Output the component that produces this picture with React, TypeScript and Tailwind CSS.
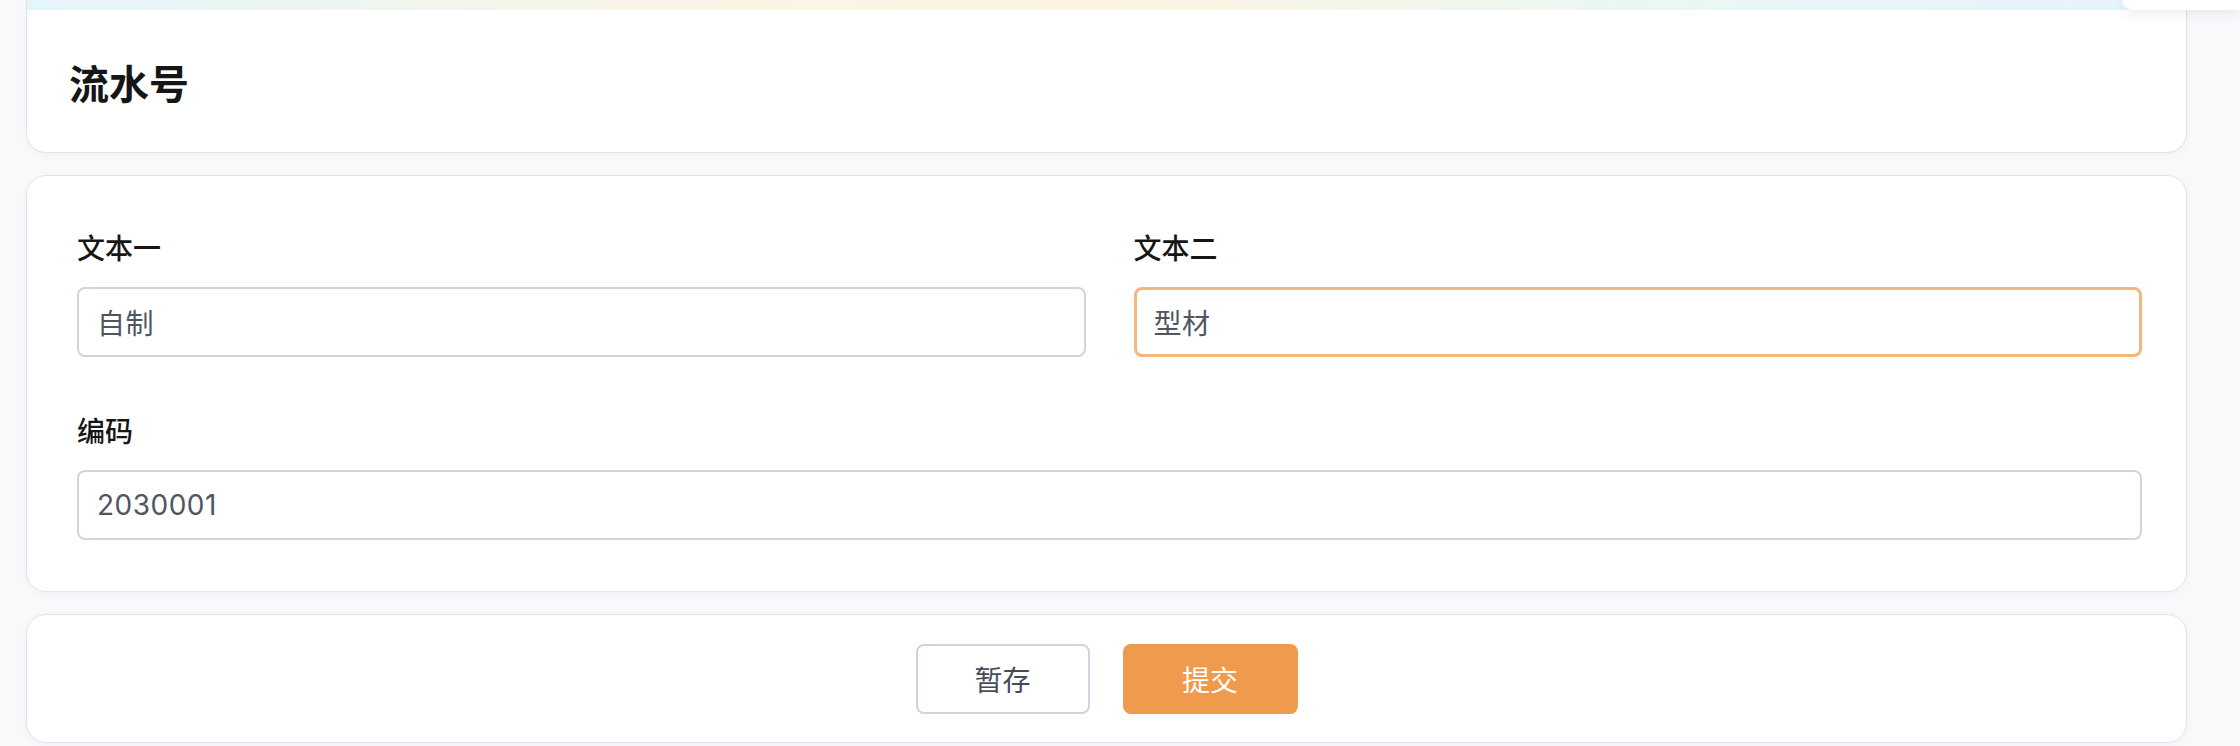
import React, { FC, useState } from "react";

const font = "font-['Noto_Sans_CJK_SC','Noto_Sans',sans-serif]";

interface FieldProps {
	label: string;
	value: string;
	focused?: boolean;
}

const Field: FC<FieldProps> = ({ label, value, focused }) => (
	<div className="flex flex-col">
		<label className="h-[40px] text-[28px] leading-[40px] font-medium text-[#161616]">
			{label}
		</label>
		<input
			className={`mt-[20px] h-[70px] w-full rounded-[8px] bg-white text-[28px] tracking-[0.5px] text-[#50555f] outline-none font-['Inter','Noto_Sans_CJK_SC',sans-serif] ${
				focused
					? "border-[3px] border-[#f4b67d] px-[17px]"
					: "border-2 border-[#d0d4e0] px-[18px]"
			}`}
			defaultValue={value}
		/>
	</div>
);

const App: FC = () => {
	const [saved, setSaved] = useState(false);

	return (
		<div
			className={`relative min-h-[746px] w-[2240px] overflow-hidden bg-[#f8f9fb] ${font}`}
		>
			{/* top right overlay */}
			<div className="absolute top-0 right-0 z-10 h-[10px] w-[118px] rounded-bl-[12px] bg-white shadow-[0_4px_12px_rgba(30,40,80,0.08)]" />

			<div className="flex w-[2161px] flex-col gap-[22px] ml-[26px]">
				{/* Header card */}
				<div className="overflow-hidden rounded-b-[20px] border border-t-0 border-[#e2e4eb] bg-white shadow-[0_2px_8px_rgba(30,40,80,0.03)]">
					<div className="h-[10px] bg-[linear-gradient(90deg,#e4f5fa_0%,#f9f5e6_30%,#fbf4e1_50%,#e9f7f5_78%,#e4f2fc_100%)]" />
					<h1 className="pt-[42px] pb-[40px] pl-[42px] text-[40px] leading-[60px] font-bold text-[#161616]">
						流水号
					</h1>
				</div>

				{/* Form card */}
				<div className="rounded-[20px] border border-[#e2e4eb] bg-white pt-[51px] pb-[51px] pl-[50px] pr-[44px] shadow-[0_2px_8px_rgba(30,40,80,0.03)]">
					<div className="grid grid-cols-2 gap-x-[48px] gap-y-[53px]">
						<Field label="文本一" value="自制" />
						<Field label="文本二" value="型材" focused />
						<div className="col-span-2">
							<Field label="编码" value="2030001" />
						</div>
					</div>
				</div>

				{/* Actions */}
				<div className="flex justify-center gap-[33px] rounded-[20px] border border-[#e2e4eb] bg-white pt-[29px] pb-[28px] shadow-[0_2px_8px_rgba(30,40,80,0.03)]">
					<button
						className="h-[70px] w-[174px] rounded-[8px] border-2 border-[#d0d4e0] bg-white text-[28px] text-[#454b57]"
						onClick={() => setSaved(!saved)}
					>
						暂存
					</button>
					<button className="h-[70px] w-[175px] rounded-[8px] bg-[#ef9a4d] text-[28px] text-white">
						提交
					</button>
				</div>
			</div>
		</div>
	);
};

export default App;
